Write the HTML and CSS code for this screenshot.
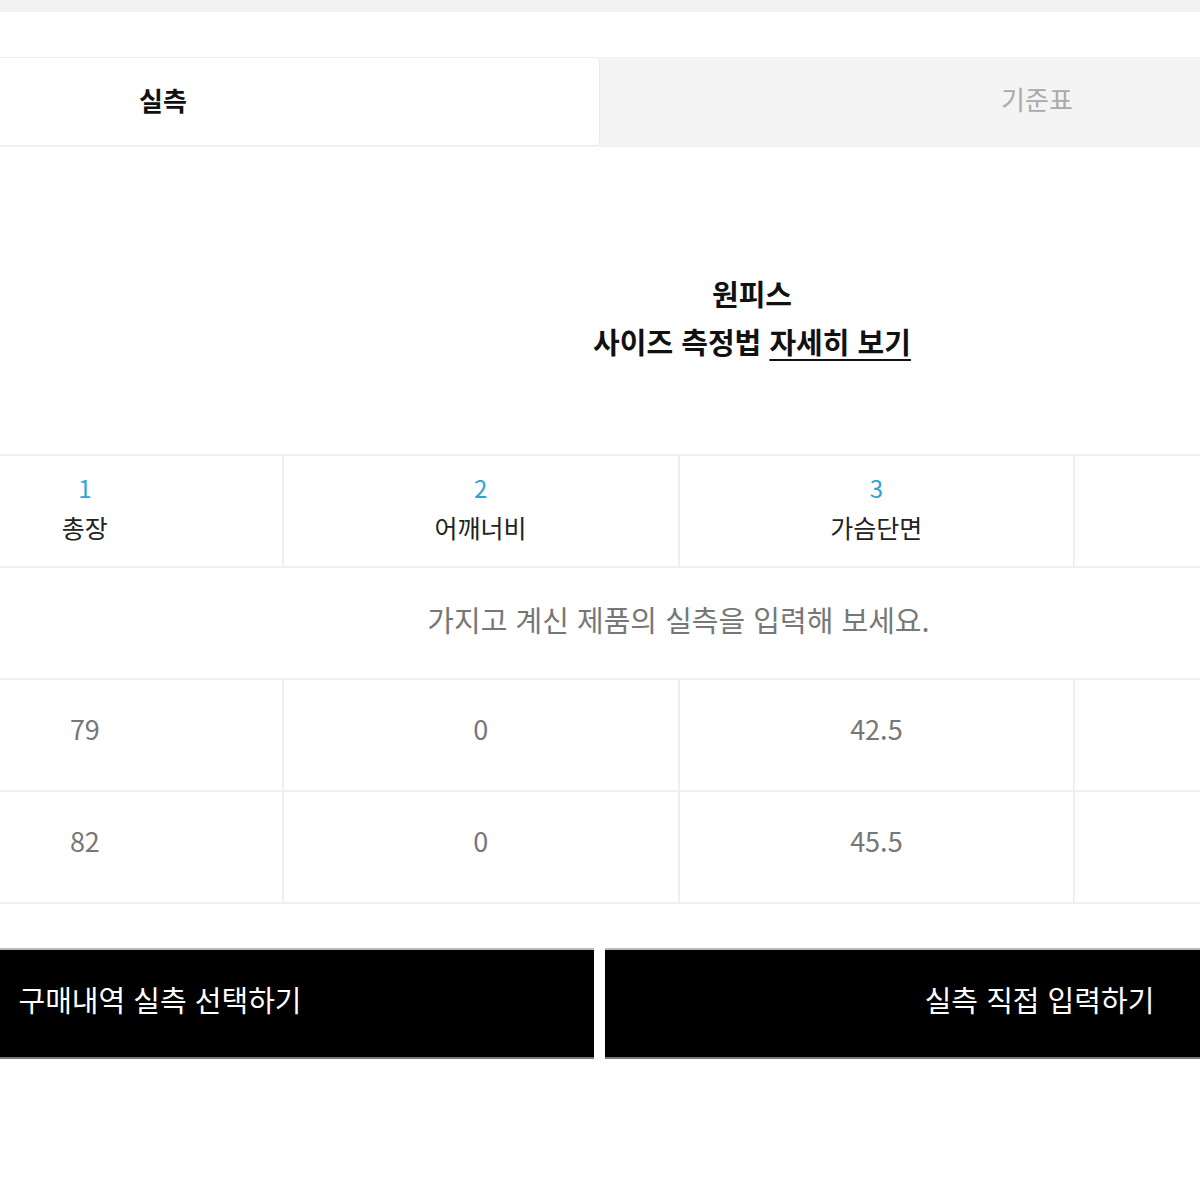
FILE: index.html
```html
<!DOCTYPE html>
<html lang="ko">
<head>
    <meta charset="UTF-8">
    <meta name="viewport" content="width=device-width, initial-scale=1.0">
    <title>실측 사이즈</title>
    <link rel="stylesheet" href="styles.css">
</head>
<body>
    <div class="top-strip"></div>
    <div class="page">
        <div class="tabs">
            <div class="tab active">실측</div>
            <div class="tab">기준표</div>
        </div>

        <div class="guide">
            <div class="guide-title">원피스</div>
            <div class="guide-link">사이즈 측정법 <a href="#">자세히 보기</a></div>
        </div>

        <table class="size-table">
            <tr class="head">
                <td><span class="num">1</span><span class="label">총장</span></td>
                <td><span class="num">2</span><span class="label">어깨너비</span></td>
                <td><span class="num">3</span><span class="label">가슴단면</span></td>
                <td></td>
            </tr>
            <tr>
                <td colspan="4" class="hint">가지고 계신 제품의 실측을 입력해 보세요.</td>
            </tr>
            <tr class="value-row">
                <td>79</td>
                <td>0</td>
                <td>42.5</td>
                <td></td>
            </tr>
            <tr class="value-row">
                <td>82</td>
                <td>0</td>
                <td>45.5</td>
                <td></td>
            </tr>
        </table>

        <div class="actions">
            <button class="btn btn-left">구매내역 실측 선택하기</button>
            <button class="btn btn-right">실측 직접 입력하기</button>
        </div>
    </div>
</body>
</html>
```

FILE: styles.css
```css
body {
    margin: 0;
    padding: 0;
    background-color: #fff;
    font-family: 'Noto Sans CJK KR', 'Noto Sans', sans-serif;
    overflow: hidden;
    width: 1200px;
}

.top-strip {
    height: 12px;
    background-color: #f1f1f1;
}

.page {
    width: 1748px;
    margin-left: -274px;
}

.tabs {
    display: flex;
    margin-top: 45px;
    background-color: #f4f4f4;
    height: 90px;
}

.tab {
    width: 874px;
    height: 88px;
    display: flex;
    justify-content: center;
    align-items: center;
    padding-bottom: 5px;
    box-sizing: border-box;
    font-size: 26px;
    color: #aaa;
}

.tab.active {
    background-color: #fff;
    color: #111;
    font-weight: 700;
    border: 1px solid #ececec;
    border-radius: 0 4px 4px 0;
    height: 89px;
}

.guide {
    padding: 122px 0 0 304px;
    text-align: center;
    font-size: 29px;
    font-weight: 700;
    line-height: 48px;
    color: #111;
    height: 185px;
}

.guide a {
    color: #111;
    text-decoration: underline;
    text-underline-offset: 5px;
    text-decoration-thickness: 2px;
}

.size-table {
    width: 1585px;
    margin-left: 160px;
    border-collapse: collapse;
    table-layout: fixed;
}

.size-table td {
    height: 110px;
    text-align: center;
    border: 2px solid #efefef;
    font-size: 27px;
    color: #777;
    padding: 0;
}

.num {
    display: block;
    color: #2fa3d6;
    font-size: 24px;
    line-height: 32px;
}

.label {
    display: block;
    color: #222;
    font-size: 25px;
    line-height: 46px;
}

.size-table .hint {
    color: #777;
    font-size: 29px;
    height: 102px;
    padding-bottom: 8px;
}

.value-row td {
    height: 96px;
    padding-bottom: 14px;
}

.actions {
    display: flex;
    gap: 11px;
    margin-top: 44px;
}

.btn {
    width: 868px;
    height: 111px;
    background-color: #000;
    color: #fff;
    border: none;
    font-family: inherit;
    font-size: 29px;
    border-top: 2px solid #bbb;
    border-bottom: 2px solid #777;
    padding: 0 0 10px;
}

.btn-right {
    width: 869px;
}
```
